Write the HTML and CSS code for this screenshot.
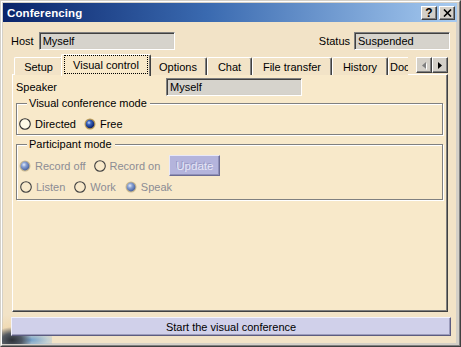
FILE: index.html
```html
<!DOCTYPE html>
<html>
<head>
<meta charset="utf-8">
<link rel="stylesheet" href="styles.css">
</head>
<body>
<svg class="defs" width="0" height="0" aria-hidden="true">
  <defs>
    <radialGradient id="ball" cx="0.38" cy="0.35" r="0.65">
      <stop offset="0" stop-color="#c8dcf8"/>
      <stop offset="0.35" stop-color="#3a64c0"/>
      <stop offset="1" stop-color="#0a1e66"/>
    </radialGradient>
    <radialGradient id="ballDis" cx="0.38" cy="0.35" r="0.65">
      <stop offset="0" stop-color="#e4ecf8"/>
      <stop offset="0.4" stop-color="#8aa2d4"/>
      <stop offset="1" stop-color="#4a64a0"/>
    </radialGradient>
  </defs>
</svg>
<div class="window">
  <div class="frame">
    <div class="titlebar">
      <span class="title">Conferencing</span>
      <div class="tbtns">
        <span class="tbtn q">?</span>
        <span class="tbtn"><svg width="9" height="8" viewBox="0 0 9 8"><path d="M1 0.5 L8 7.5 M8 0.5 L1 7.5" stroke="#000" stroke-width="1.6"/></svg></span>
      </div>
    </div>
    <div class="body">
      <div class="hostrow">
        <span class="lbl">Host</span>
        <span class="field host">Myself</span>
        <span class="lbl status-lbl">Status</span>
        <span class="field status">Suspended</span>
      </div>
      <div class="tabrow">
        <div class="tabs">
          <div class="tab w-setup">Setup</div>
          <div class="tab w-vc selected"><span class="focus">Visual control</span></div>
          <div class="tab w-opt">Options</div>
          <div class="tab w-chat">Chat</div>
          <div class="tab w-ft">File transfer</div>
          <div class="tab w-hist">History</div>
          <div class="tab w-doc">Doc</div>
        </div>
        <div class="spin">
          <span class="sbtn disabled"><svg width="4" height="7" viewBox="0 0 4 7"><path d="M4 0 L0 3.5 L4 7 Z" fill="#808080"/></svg></span>
          <span class="sbtn"><svg width="4" height="7" viewBox="0 0 4 7"><path d="M0 0 L4 3.5 L0 7 Z" fill="#000"/></svg></span>
        </div>
      </div>
      <div class="panel">
        <div class="speaker-row">
          <span class="speaker-lbl">Speaker</span>
          <span class="field speaker">Myself</span>
        </div>
        <fieldset class="group g1">
          <legend>Visual conference mode</legend>
          <div class="row">
            <span class="opt"><svg class="radio" width="12" height="12" viewBox="0 0 12 12"><circle cx="6" cy="6" r="5.3" fill="#fffbe8" stroke="#303030" stroke-width="1.1"/></svg>Directed</span>
            <span class="opt"><svg class="radio" width="12" height="12" viewBox="0 0 12 12"><circle cx="6" cy="6" r="5.5" fill="#b89a58"/><circle cx="6" cy="6" r="4.3" fill="url(#ball)"/></svg>Free</span>
          </div>
        </fieldset>
        <fieldset class="group g2">
          <legend>Participant mode</legend>
          <div class="row r1">
            <span class="opt dis"><svg class="radio" width="12" height="12" viewBox="0 0 12 12"><circle cx="6" cy="6" r="5.5" fill="#c8b890"/><circle cx="6" cy="6" r="4.4" fill="url(#ballDis)"/></svg>Record off</span>
            <span class="opt dis"><svg class="radio" width="12" height="12" viewBox="0 0 12 12"><circle cx="6" cy="6" r="5.3" fill="none" stroke="#404040" stroke-width="1.1"/></svg>Record on</span>
            <span class="update">Update</span>
          </div>
          <div class="row r2">
            <span class="opt dis"><svg class="radio" width="12" height="12" viewBox="0 0 12 12"><circle cx="6" cy="6" r="5.3" fill="none" stroke="#404040" stroke-width="1.1"/></svg>Listen</span>
            <span class="opt dis"><svg class="radio" width="12" height="12" viewBox="0 0 12 12"><circle cx="6" cy="6" r="5.3" fill="none" stroke="#404040" stroke-width="1.1"/></svg>Work</span>
            <span class="opt dis"><svg class="radio" width="12" height="12" viewBox="0 0 12 12"><circle cx="6" cy="6" r="5.5" fill="#c8b890"/><circle cx="6" cy="6" r="4.4" fill="url(#ballDis)"/></svg>Speak</span>
          </div>
        </fieldset>
      </div>
      <div class="start">Start the visual conference</div>
    </div>
  </div>
  <div class="deco"></div>
</div>
</body>
</html>
```

FILE: styles.css
```css
html, body {
  margin: 0;
  padding: 0;
  background: #d4d0c8;
}
body {
  width: 461px;
  height: 347px;
  overflow: hidden;
  font-family: "Liberation Sans", Arial, sans-serif;
  font-size: 11px;
  color: #000;
}
.defs {
  position: absolute;
}
.window {
  position: relative;
  width: 461px;
  height: 347px;
  box-sizing: border-box;
  border: 1px solid;
  border-color: #d4d0c8 #404040 #404040 #d4d0c8;
  background: #d4d0c8;
  display: flex;
  flex-direction: column;
}
.frame {
  flex: 1;
  display: flex;
  flex-direction: column;
  border: 1px solid;
  border-color: #ffffff #808080 #808080 #ffffff;
  padding: 1px 3px 2px 1px;
}
.titlebar {
  height: 19px;
  flex: 0 0 19px;
  display: flex;
  align-items: center;
  padding: 0 2px 0 2px;
  margin-right: -1px;
  background: linear-gradient(to right, #0a246a 0%, #3a6ab0 45%, #a6caf0 100%);
}
.title {
  color: #fff;
  font-weight: bold;
  font-size: 11.5px;
  margin-left: 2px;
  letter-spacing: 0.1px;
}
.tbtns {
  margin-left: auto;
  display: flex;
  gap: 2px;
}
.tbtn {
  width: 16px;
  height: 14px;
  box-sizing: border-box;
  background: #d4d0c8;
  border: 1px solid;
  border-color: #ffffff #404040 #404040 #ffffff;
  box-shadow: inset -1px -1px 0 #808080;
  display: flex;
  align-items: center;
  justify-content: center;
}
.tbtn.q {
  font-weight: bold;
  font-size: 12px;
  line-height: 12px;
}
.body {
  flex: 1;
  display: flex;
  flex-direction: column;
  background: #f2e3c7;
  padding: 10px 8px 7px 9px;
}
.hostrow {
  display: flex;
  align-items: center;
  height: 18px;
  margin-left: -1px;
  margin-right: -2px;
}
.lbl {
  margin-right: 5px;
}
.status-lbl {
  margin-left: auto;
  margin-right: 4px;
}
.field {
  height: 18px;
  box-sizing: border-box;
  background: #d6d3cc;
  border: 1px solid;
  border-color: #808080 #ffffff #ffffff #808080;
  box-shadow: inset 1px 1px 0 #404040, inset -1px -1px 0 #d4d0c8;
  padding: 0 3px;
  display: flex;
  align-items: center;
}
.host {
  width: 136px;
}
.status {
  width: 96px;
}
.tabrow {
  margin-top: 4px;
  height: 21px;
  margin-bottom: -1px;
  display: flex;
  position: relative;
  z-index: 2;
}
.tabs {
  flex: 0 0 396px;
  height: 22px;
  overflow: hidden;
  display: flex;
  align-items: flex-end;
  padding-left: 2px;
  box-sizing: border-box;
}
.tab {
  flex: 0 0 auto;
  height: 18px;
  margin-bottom: 1px;
  box-sizing: border-box;
  border-top: 1px solid #fff;
  border-left: 1px solid #fff;
  border-right: 1px solid #404040;
  box-shadow: inset -1px 0 0 #808080;
  border-radius: 2px 2px 0 0;
  display: flex;
  align-items: center;
  justify-content: center;
  background: #f2e3c7;
  white-space: nowrap;
  overflow: hidden;
}
.w-setup { width: 49px; }
.w-vc { width: 87px; }
.w-opt { width: 58px; }
.w-chat { width: 45px; }
.w-ft { width: 80px; }
.w-hist { width: 56px; }
.w-doc { width: 22px; justify-content: flex-start; padding-left: 1px; border-right: 1px dotted #707070; box-shadow: none; }
.tab.selected {
  width: 90px;
  height: 22px;
  margin: 0 -2px 0 -2px;
  position: relative;
  z-index: 1;
  background: #f8e9ca;
  border-bottom: none;
  align-items: flex-start;
}
.focus {
  display: flex;
  align-items: center;
  justify-content: center;
  width: 84px;
  height: 19px;
  box-sizing: border-box;
  border: 1px dotted #000;
}
.spin {
  margin-left: auto;
  margin-top: 3px;
  display: flex;
  align-self: flex-start;
}
.sbtn {
  width: 16px;
  height: 16px;
  box-sizing: border-box;
  background: #d4d0c8;
  border: 1px solid;
  border-color: #ffffff #404040 #404040 #ffffff;
  box-shadow: inset -1px -1px 0 #808080;
  display: flex;
  align-items: center;
  justify-content: center;
}
.sbtn.disabled svg {
  filter: drop-shadow(1px 1px 0 #fff);
}
.panel {
  flex: 1;
  position: relative;
  z-index: 1;
  background: #f8e9ca;
  border-top: 1px solid #fff;
  border-left: 1px solid #fff;
  border-right: 1px solid #404040;
  border-bottom: 1px solid #404040;
  box-shadow: inset -1px -1px 0 #808080;
  padding: 3px 4px 0 3px;
  display: flex;
  flex-direction: column;
}
.speaker-row {
  display: flex;
  align-items: center;
  height: 18px;
}
.speaker-lbl {
  width: 150px;
}
.speaker {
  width: 136px;
}
.group {
  margin: 0;
  padding: 0 0 0 2px;
  min-width: 0;
  border: 1px solid #808080;
  box-shadow: inset 1px 1px 0 #fff, 1px 1px 0 #fff;
}
.group legend {
  padding: 0 3px 0 2px;
  margin-left: 8px;
  line-height: 12px;
  background: #f8e9ca;
}
.g1 {
  margin-top: 1px;
}
.g1 .row {
  margin-top: 8px;
  margin-bottom: 3px;
}
.g2 {
  margin-top: 3px;
}
.row {
  display: flex;
  align-items: center;
  height: 14px;
  gap: 8px;
}
.r1 {
  height: 21px;
  margin-top: 5px;
}
.r2 {
  margin-top: 4px;
  margin-bottom: 5px;
  padding-left: 1px;
  gap: 9px;
}
.opt {
  display: flex;
  align-items: center;
  white-space: nowrap;
}
.radio {
  margin-right: 4px;
  flex: 0 0 12px;
}
.opt.dis {
  color: #8c8c94;
}
.update {
  width: 51px;
  height: 21px;
  box-sizing: border-box;
  margin-left: 1px;
  display: flex;
  align-items: center;
  justify-content: center;
  background: #b4b4dc;
  border: 1px solid;
  border-color: #e8e8f8 #6c6c94 #6c6c94 #e8e8f8;
  box-shadow: inset -1px -1px 0 #9090b8;
  color: #e6e6f6;
  text-shadow: -1px -1px 0 rgba(110, 110, 160, 0.45);
  font-size: 11.5px;
}
.start {
  position: relative;
  z-index: 2;
  margin: 5px -3px 0 -1px;
  height: 19px;
  box-sizing: border-box;
  background: #d0d0ea;
  border: 1px solid;
  border-color: #f2f2fc #5c5c80 #5c5c80 #f2f2fc;
  box-shadow: inset -1px -1px 0 #9c9cbc;
  display: flex;
  align-items: center;
  justify-content: center;
}
.deco {
  position: absolute;
  left: 1px;
  bottom: 2px;
  width: 50px;
  height: 30px;
  z-index: 1;
  background:
    radial-gradient(ellipse 20px 13px at 10px 26px, rgba(36, 40, 48, 0.95) 0%, rgba(70, 78, 90, 0.9) 50%, rgba(100, 115, 130, 0) 100%),
    radial-gradient(ellipse 30px 10px at 28px 26px, rgba(90, 150, 210, 0.85) 0%, rgba(150, 195, 235, 0.5) 60%, rgba(150, 195, 235, 0) 100%),
    radial-gradient(ellipse 44px 24px at 16px 24px, rgba(235, 195, 130, 0.55) 0%, rgba(245, 215, 170, 0) 100%);
  pointer-events: none;
}
```
